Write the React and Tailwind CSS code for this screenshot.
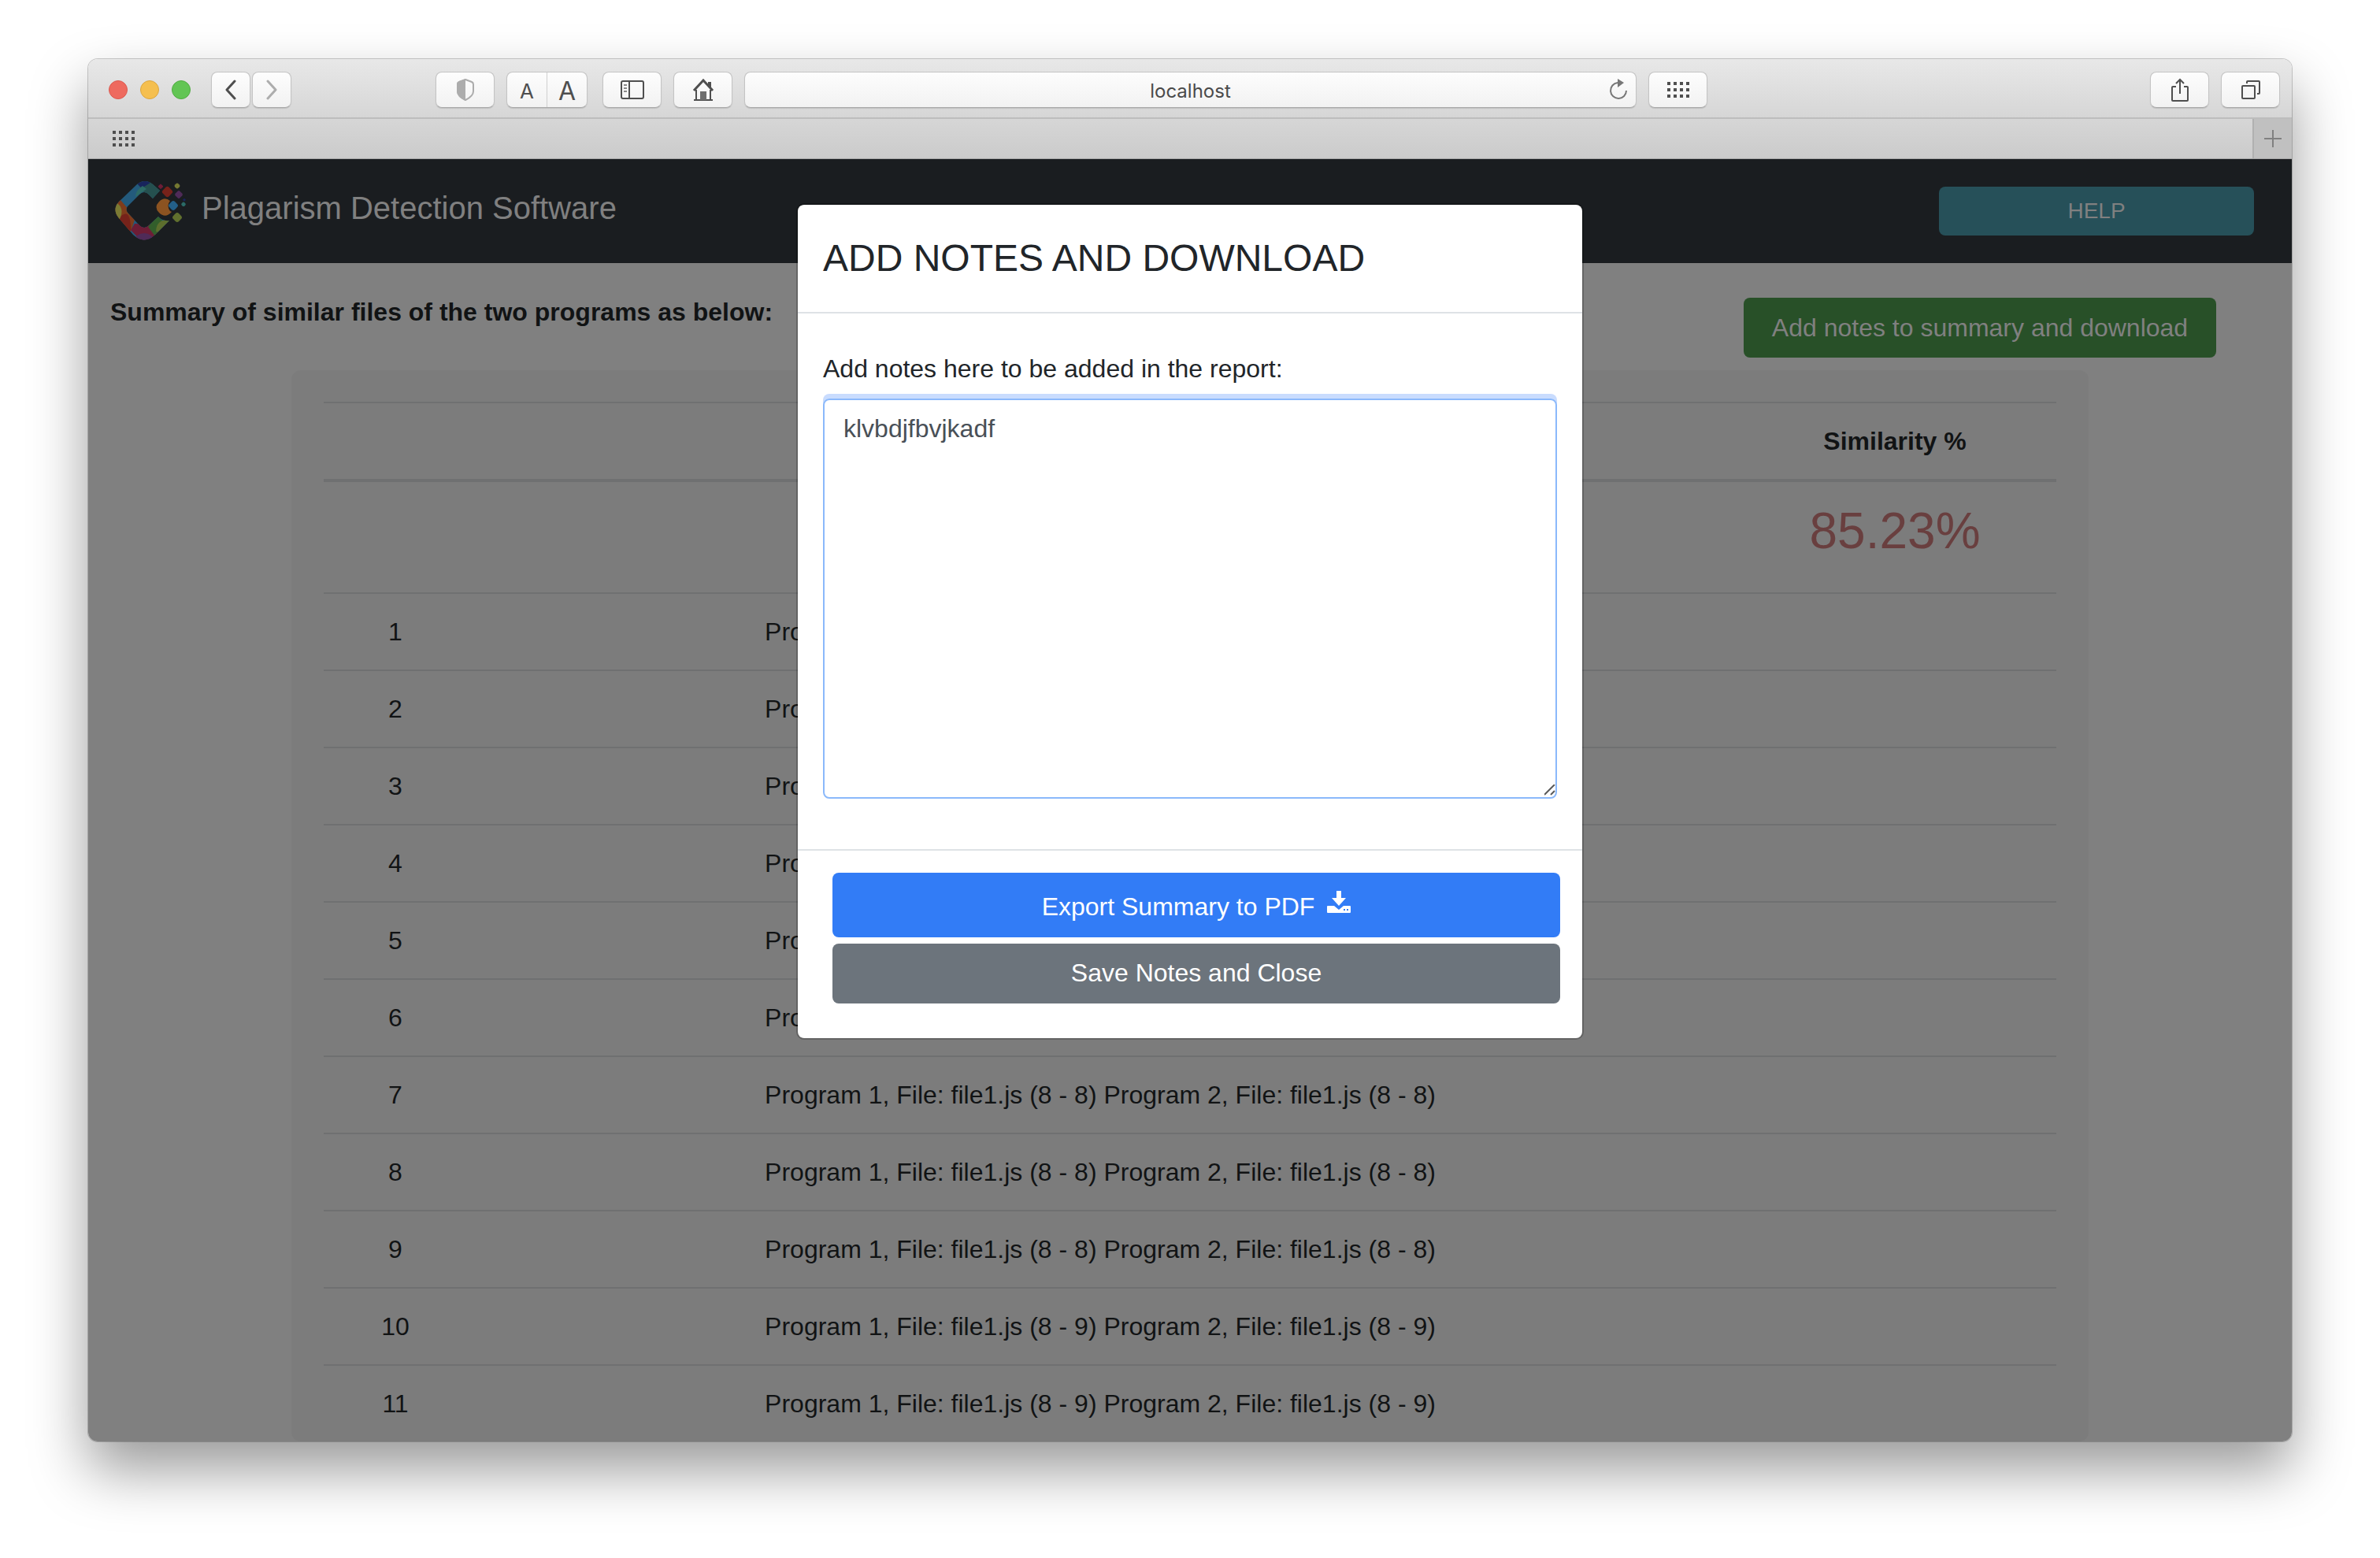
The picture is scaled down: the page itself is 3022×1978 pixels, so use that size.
const navBtn =
  "flex h-[46px] items-center justify-center rounded-lg border border-[#c4c4c4] border-b-[#a8a8a8] bg-linear-to-b from-[#fdfdfd] to-[#f2f2f2] text-[#4f4f4f] shadow-[0_1px_1px_rgba(0,0,0,0.12)]";

const rows = [
  ["1", "8 - 8"],
  ["2", "8 - 8"],
  ["3", "8 - 8"],
  ["4", "8 - 8"],
  ["5", "8 - 8"],
  ["6", "8 - 8"],
  ["7", "8 - 8"],
  ["8", "8 - 8"],
  ["9", "8 - 8"],
  ["10", "8 - 9"],
  ["11", "8 - 9"],
];

function GridIcon() {
  const xs = [0, 8, 16, 24];
  const ys = [0, 8, 16];
  return (
    <svg width="28" height="20" viewBox="0 0 28 20" fill="#4f4f4f" aria-hidden="true">
      {ys.map((y) => xs.map((x) => <rect key={x + "-" + y} x={x} y={y} width="4" height="4" />))}
    </svg>
  );
}

function Logo() {
  return (
    <svg width="90" height="76" viewBox="0 0 90 76" aria-hidden="true">
      <defs>
        <clipPath id="ring">
          <path d="M28 4 Q38 -4 48 4 L57 12 L48 22 L43 17 Q37 11 31 17 L16 32 Q13 36 16 40 L31 56 Q37 62 43 56 L55 45 Q60 51 69 50 L51 68 Q37 81 23 68 L5 47 Q-4 36 5 26 Z" />
        </clipPath>
      </defs>
      <g clipPath="url(#ring)">
        <rect width="90" height="76" fill="#235a7c" />
        <path d="M26 0 H60 V24 H46 L35 12 Z" fill="#25504f" />
        <path d="M25 0 H48 L34 9 Z" fill="#18245c" />
        <path d="M35 6 Q26 12 26 20 L40 10 Z" fill="#2d6b66" />
        <path d="M0 26 L7 24 L26 46 L20 64 L0 50 Z" fill="#7f3c1b" />
        <path d="M4 48 Q20 30 20 62 L18 66 Z" fill="#76221a" />
        <path d="M0 26 Q14 34 5 50 L0 46 Z" fill="#7b7a33" />
        <path d="M20 62 L25 54 H44 L54 66 L37 80 Z" fill="#6d1d36" />
        <ellipse cx="37" cy="75" rx="12" ry="9" fill="#4f2b58" />
        <path d="M42 58 L54 44 L62 52 L51 70 Z" fill="#325e2b" />
        <path d="M52 64 Q52 48 72 48 L58 66 Z" fill="#5c6e2d" />
      </g>
      <path d="M56 26 Q63 19 70 25 Q65 31 70 38 L72 39 Q64 48 56 40 Q49 33 56 26 Z" fill="#8c5321" />
      <g>
        <rect x="61" y="8" width="11" height="11" rx="3" transform="rotate(45 66.5 13.5)" fill="#76221a" />
        <rect x="69" y="26" width="10" height="10" rx="3" transform="rotate(45 74 31)" fill="#235f88" />
        <rect x="74" y="41" width="10" height="10" rx="3" transform="rotate(45 79 46)" fill="#61702e" />
        <rect x="77" y="13" width="8" height="8" rx="2" transform="rotate(45 81 17)" fill="#4f2b58" />
        <rect x="76" y="3" width="6" height="6" rx="2" transform="rotate(45 79 6)" fill="#757932" />
        <rect x="56" y="4" width="5" height="5" rx="1" transform="rotate(45 58 6)" fill="#6d1d36" />
        <rect x="84" y="27" width="5" height="5" rx="2" transform="rotate(45 87 30)" fill="#2a6a66" />
        <rect x="87" y="22" width="3" height="3" rx="1" transform="rotate(45 88 23)" fill="#18245c" />
      </g>
    </svg>
  );
}

function Toolbar() {
  return (
    <div className="flex h-[76px] items-center border-b-2 border-[#bdbdbd] bg-linear-to-b from-[#e8e8e8] to-[#d6d6d6] pt-1 pr-[15px] pl-[26px]">
      <div className="flex gap-4">
        <span className="size-6 rounded-full border border-[#dc5a50] bg-[#ee6a5f]" />
        <span className="size-6 rounded-full border border-[#dca63f] bg-[#f5bf4f]" />
        <span className="size-6 rounded-full border border-[#51ac42] bg-[#62c554]" />
      </div>
      <div className="ml-[26px] flex gap-[2px]">
        <button aria-label="Back" className={`${navBtn} w-[50px]`}>
          <svg width="16" height="26" viewBox="0 0 16 26" fill="none" stroke="#4f4f4f" strokeWidth="3" strokeLinecap="round" strokeLinejoin="round"><path d="M13 2 L3 13 L13 24" /></svg>
        </button>
        <button aria-label="Forward" className={`${navBtn} w-[50px]`}>
          <svg width="16" height="26" viewBox="0 0 16 26" fill="none" stroke="#adadad" strokeWidth="3" strokeLinecap="round" strokeLinejoin="round"><path d="M3 2 L13 13 L3 24" /></svg>
        </button>
      </div>
      <div className="ml-[183px] flex gap-[15px]">
        <button aria-label="Privacy report" className={`${navBtn} w-[75px]`}>
          <svg width="24" height="28" viewBox="0 0 24 28"><path d="M12 1 L20 4 Q22 5 22 7 V16 Q22 22 12 27 Q2 22 2 16 V7 Q2 5 4 4 Z" fill="none" stroke="#acacac" strokeWidth="2" /><path d="M12 0 L4 3 Q1 4 1 7 V16 Q1 23 12 28 Z" fill="#acacac" /></svg>
        </button>
        <div className={`${navBtn} mr-1 w-[103px]`}>
          <button aria-label="Smaller text" className="h-full flex-1 border-r border-[#cfcfcf] font-['Inter',sans-serif] text-[26px]">A</button>
          <button aria-label="Larger text" className="h-full flex-1 font-['Inter',sans-serif] text-[32px]">A</button>
        </div>
        <button aria-label="Sidebar" className={`${navBtn} w-[75px]`}>
          <svg width="32" height="26" viewBox="0 0 32 26" fill="none" stroke="#4f4f4f" strokeWidth="2"><rect x="2" y="2" width="28" height="22" rx="2" /><path d="M12 2 V24" /><path d="M5 7 H9 M5 11 H9 M5 15 H9" stroke="#8a8a8a" /></svg>
        </button>
        <button aria-label="Home" className={`${navBtn} w-[75px]`}>
          <svg width="28" height="28" viewBox="0 0 28 28"><path d="M2 15 L14 2 L26 15" fill="none" stroke="#4f4f4f" strokeWidth="3" /><path d="M20 4 H24 V13 L20 9 Z" fill="#4f4f4f" /><path d="M5 14 V26 M23 14 V26 M2 27 H26" stroke="#4f4f4f" strokeWidth="2" /><rect x="10" y="16" width="8" height="11" fill="#6e6e6e" /></svg>
        </button>
      </div>
      <div className={`${navBtn} mx-[15px] flex-1 pr-2`}>
        <input aria-label="Address" defaultValue="localhost" className="w-full min-w-0 flex-1 bg-transparent pt-1 pl-9 text-center font-['Inter',sans-serif] text-2xl text-[#4a4a4a] outline-none" />
        <button aria-label="Reload">
          <svg width="28" height="30" viewBox="0 0 28 30"><path d="M13 6 A10 10 0 1 0 24 16" fill="none" stroke="#777" strokeWidth="2" /><path d="M13 1 L21 6 L13 12 Z" fill="#777" /></svg>
        </button>
      </div>
      <button aria-label="Top sites" className={`${navBtn} w-[75px]`}><GridIcon /></button>
      <div className="ml-[562px] flex gap-[15px]">
        <button aria-label="Share" className={`${navBtn} w-[75px]`}>
          <svg width="22" height="30" viewBox="0 0 22 30" fill="none" stroke="#4f4f4f" strokeWidth="2"><path d="M6 11 H2 Q1 11 1 12 V28 Q1 29 2 29 H20 Q21 29 21 28 V12 Q21 11 20 11 H16" /><path d="M11 20 V2 M6 7 L11 2 L16 7" /></svg>
        </button>
        <button aria-label="Show tabs" className={`${navBtn} w-[75px]`}>
          <svg width="24" height="24" viewBox="0 0 24 24" fill="none" stroke="#4f4f4f" strokeWidth="2"><rect x="1" y="7" width="16" height="16" rx="1" /><path d="M7 4 V2 Q7 1 8 1 H22 Q23 1 23 2 V16 Q23 17 22 17 H20" /></svg>
        </button>
      </div>
    </div>
  );
}

export default function App() {
  return (
    <div className="bg-white px-28 pt-[75px] pb-[148px] font-['Liberation_Sans',Arial,sans-serif] text-[32px] leading-[48px] text-[#111314]">
      <div className="overflow-hidden rounded-xl shadow-[0_0_0_1px_rgba(0,0,0,0.2),0_36px_72px_rgba(0,0,0,0.4)]">
        <Toolbar />
        <div className="flex h-[51px] items-center justify-between border-b border-[#a6a6a6] bg-linear-to-b from-[#d6d6d6] to-[#cbcbcb] pl-[31px]">
          <button aria-label="Bookmarks"><GridIcon /></button>
          <button aria-label="New tab" className="flex h-full w-[50px] items-center justify-center border-l-2 border-[#b0b0b0] bg-[#c0c0c0]">
            <svg width="22" height="22" viewBox="0 0 22 22" stroke="#808080" strokeWidth="2"><path d="M11 0 V22 M0 11 H22" /></svg>
          </button>
        </div>

        <div className="relative h-[1628px] overflow-hidden bg-[#808080]">
          <header className="flex h-[132px] items-center justify-between bg-[#1a1d20] pr-12 pl-[34px]">
            <a href="#home" className="flex items-center gap-5 text-[40px] text-[#808080]">
              <Logo />
              <span className="pb-2">Plagarism Detection Software</span>
            </a>
            <button className="h-[62px] w-[400px] rounded-lg bg-[#265059] text-[28px] text-[#808080]">HELP</button>
          </header>

          <div className="flex items-start justify-between pt-[44px] pr-24 pl-7">
            <h1 className="-mt-1.5 font-bold">Summary of similar files of the two programs as below:</h1>
            <button className="h-[76px] w-[600px] rounded-lg bg-[#285028] text-[#808080]">Add notes to summary and download</button>
          </div>

          <main className="mx-[258px] mt-4 rounded-xl bg-[#7c7c7c] px-[41px] pt-10">
            <table className="w-full table-fixed border-separate border-spacing-0 text-center">
              <colgroup>
                <col className="w-[182px]" />
                <col />
                <col className="w-[410px]" />
              </colgroup>
              <thead>
                <tr className="h-[102px]">
                  <th className="border-t-2 border-b-4 border-[#6f7071]" />
                  <th className="border-t-2 border-b-4 border-[#6f7071]" />
                  <th className="border-t-2 border-b-4 border-[#6f7071] font-bold">Similarity %</th>
                </tr>
              </thead>
              <tbody>
                <tr className="h-[140px]">
                  <td />
                  <td />
                  <td className="pb-4 text-[64px] leading-[76px] text-[#693f3f]">85.23%</td>
                </tr>
                {rows.map(([n, range]) => (
                  <tr key={n} className="h-[98px]">
                    <td className="border-t-2 border-[#6f7071]">{n}</td>
                    <td className="border-t-2 border-[#6f7071]">{`Program 1, File: file1.js (${range}) Program 2, File: file1.js (${range})`}</td>
                    <td className="border-t-2 border-[#6f7071]" />
                  </tr>
                ))}
              </tbody>
            </table>
          </main>

          <div className="absolute inset-x-0 top-0 flex justify-center pt-[58px]">
            <div role="dialog" aria-labelledby="notes-title" className="w-[996px] rounded-lg bg-white text-[#212529] shadow-[0_0_0_2px_rgba(0,0,0,0.2)]">
              <h2 id="notes-title" className="border-b-2 border-[#dee2e6] py-9 px-8 text-5xl leading-[64px]">ADD NOTES AND DOWNLOAD</h2>
              <div className="px-8 pt-[46px] pb-16">
                <label htmlFor="notes" className="mb-[14px] block">Add notes here to be added in the report:</label>
                <div className="relative">
                  <textarea
                    id="notes"
                    defaultValue="klvbdjfbvjkadf"
                    spellCheck={false}
                    className="block h-[508px] w-full resize-none rounded-lg border-2 border-[#8bb9fb] px-6 py-3 text-[#495057] shadow-[0_-6px_0_#c9dcfe] outline-none"
                  />
                  <svg width="14" height="14" viewBox="0 0 14 14" stroke="#5a5a5a" strokeWidth="2" className="absolute right-[2px] bottom-1" aria-hidden="true"><path d="M0 13 L13 0 M8 13 L13 8" /></svg>
                </div>
              </div>
              <div className="flex flex-col gap-2 border-t-2 border-[#dee2e6] pt-7 pr-7 pb-11 pl-11 text-white">
                <button className="flex h-[82px] items-center justify-center gap-4 rounded-lg bg-[#327cf6] pt-1">
                  Export Summary to PDF
                  <svg width="30" height="28" viewBox="0 0 30 28" className="mb-3" fill="#fff" aria-hidden="true">
                    <path d="M12 0 H18 V9 H24 L15 19 L6 9 H12 Z" />
                    <path fillRule="evenodd" d="M1 19 H9 L15 24 L21 19 H29 Q30 19 30 20 V27 Q30 28 29 28 H1 Q0 28 0 27 V20 Q0 19 1 19 Z M21 23 V25 H23 V23 Z M25 23 V25 H27 V23 Z" />
                  </svg>
                </button>
                <button className="h-[76px] rounded-lg bg-[#6c747c] pb-0.5">Save Notes and Close</button>
              </div>
            </div>
          </div>
        </div>
      </div>
    </div>
  );
}
